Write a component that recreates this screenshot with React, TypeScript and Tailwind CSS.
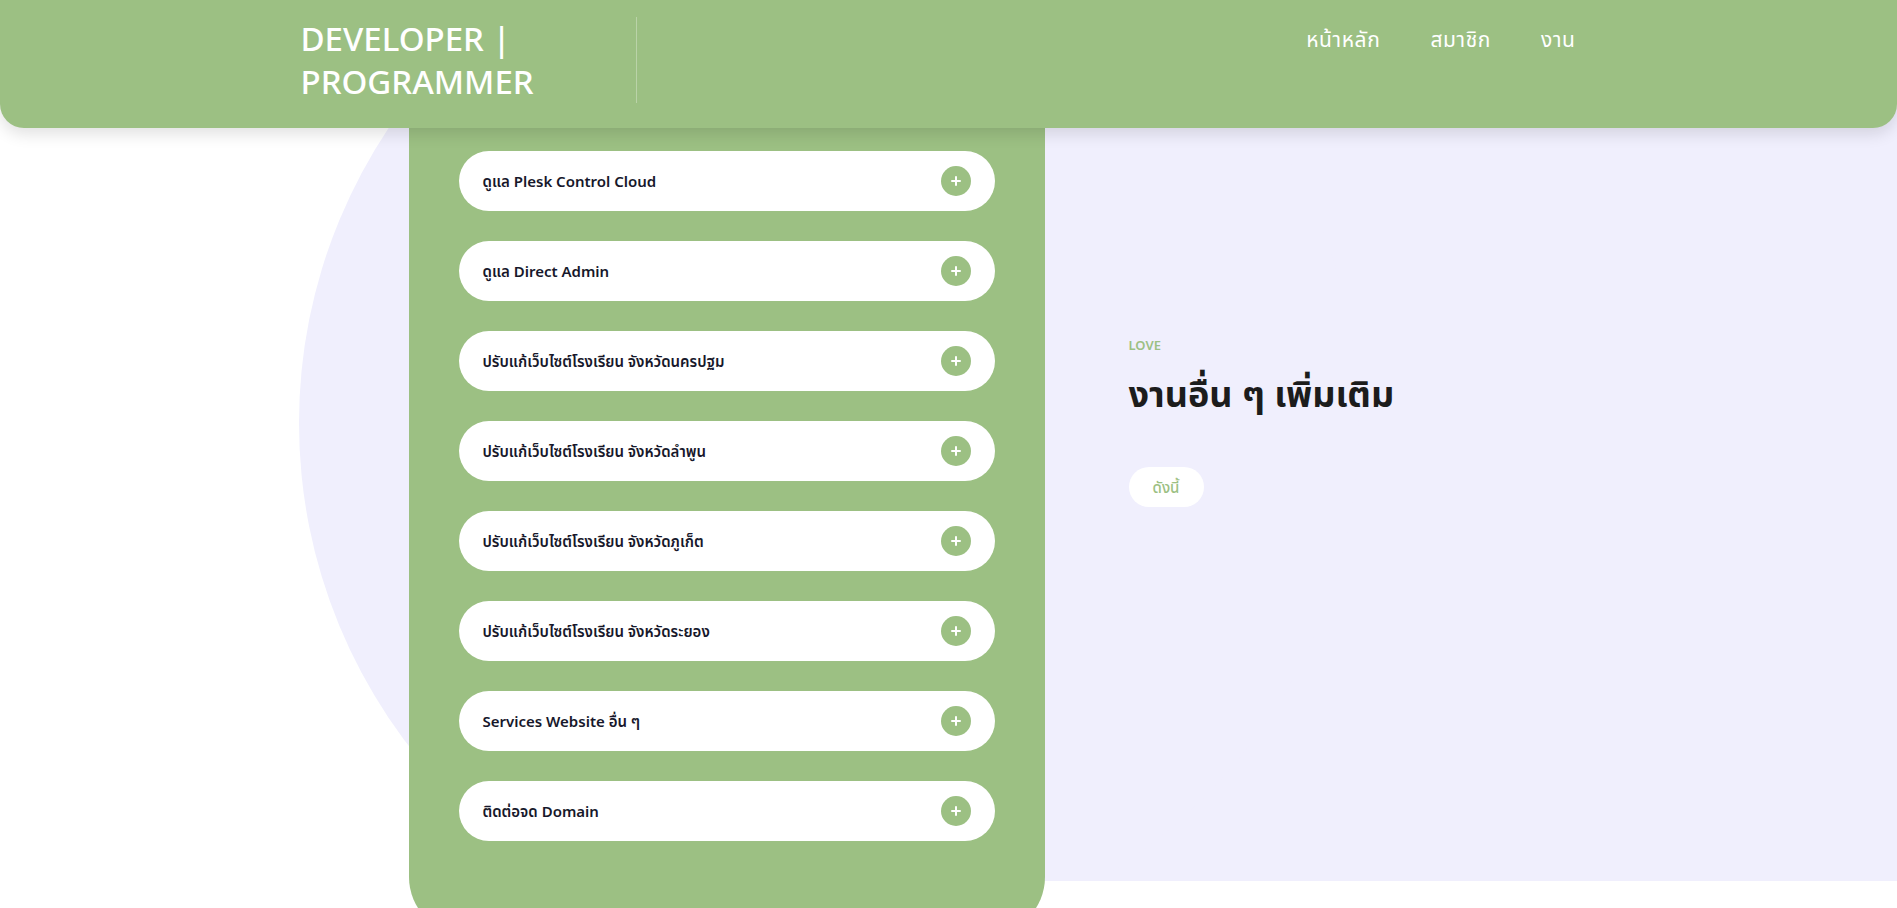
import React from 'react';

const services = [
  'ดูแล Plesk Control Cloud',
  'ดูแล Direct Admin',
  'ปรับแก้เว็บไซต์โรงเรียน จังหวัดนครปฐม',
  'ปรับแก้เว็บไซต์โรงเรียน จังหวัดลำพูน',
  'ปรับแก้เว็บไซต์โรงเรียน จังหวัดภูเก็ต',
  'ปรับแก้เว็บไซต์โรงเรียน จังหวัดระยอง',
  'Services Website อื่น ๆ',
  'ติดต่อจด Domain',
];

const PlusDot = () => (
  <span className="w-[30px] h-[30px] rounded-full bg-[#9cc083] flex items-center justify-center shrink-0">
    <svg width="10" height="10" viewBox="0 0 10 10">
      <path d="M5 1v8M1 5h8" stroke="#fff" strokeWidth="2" strokeLinecap="round" />
    </svg>
  </span>
);

export default function App() {
  return (
    <div className="relative min-h-screen bg-white overflow-hidden font-['Noto_Sans','Noto_Sans_Thai',sans-serif] text-[#17182b]">
      {/* Header */}
      <header className="relative z-20 h-[128px] bg-[#9cc083] rounded-b-[24px] shadow-[0_6px_16px_rgba(0,0,0,0.12)]">
        <div className="mx-auto w-[1320px] px-3 pt-[17px] flex">
          <div className="w-[336px] border-r border-white/30">
            <a href="#" className="block text-white text-[33px] font-medium leading-[43px]">
              DEVELOPER |<br />PROGRAMMER
            </a>
          </div>
          <nav className="ml-auto -mr-[4px] flex">
            <a href="#" className="px-[25px] text-white text-[21px] tracking-[0.6px] leading-[44px]">หน้าหลัก</a>
            <a href="#" className="px-[25px] text-white text-[21px] tracking-[0.6px] leading-[44px]">สมาชิก</a>
            <a href="#" className="px-[25px] text-white text-[21px] tracking-[0.6px] leading-[44px]">งาน</a>
          </nav>
        </div>
      </header>

      {/* Services */}
      <section className="relative -mt-[40px]">
        {/* background shapes */}
        <div className="absolute inset-x-0 top-0 h-[793px] overflow-hidden">
          <div className="absolute left-[1044px] right-0 top-0 bottom-0 bg-[#f0effd]"></div>
          <div className="absolute left-[299px] top-[-195px] w-[1060px] h-[1060px] rounded-full bg-[#f0effd]"></div>
        </div>

        <div className="relative z-10 mx-auto w-[1320px] px-3 flex">
          <div className="ml-[108px] w-[636px] bg-[#9cc083] rounded-b-[58px] px-[50px] pt-[63px] pb-[94px] flex flex-col gap-[30px]">
            {services.map((s, i) => (
              <button
                key={i}
                className="h-[60px] bg-white rounded-full pl-6 pr-6 flex items-center justify-between text-left"
              >
                <span className="text-[15px] font-semibold text-[#17182b]">{s}</span>
                <PlusDot />
              </button>
            ))}
          </div>

          <div className="ml-[84px] pt-[247px]">
            <p className="text-[13px] font-semibold leading-[20px] text-[#9cc083]">LOVE</p>
            <h2 className="mt-[14px] text-[36px] font-bold leading-[50px] text-[#1c1c1c]">งานอื่น ๆ เพิ่มเติม</h2>
            <button className="mt-[48px] w-[75px] h-[40px] rounded-full bg-white text-[15px] font-medium text-[#9cc083]">
              ดังนี้
            </button>
          </div>
        </div>
      </section>
    </div>
  );
}
